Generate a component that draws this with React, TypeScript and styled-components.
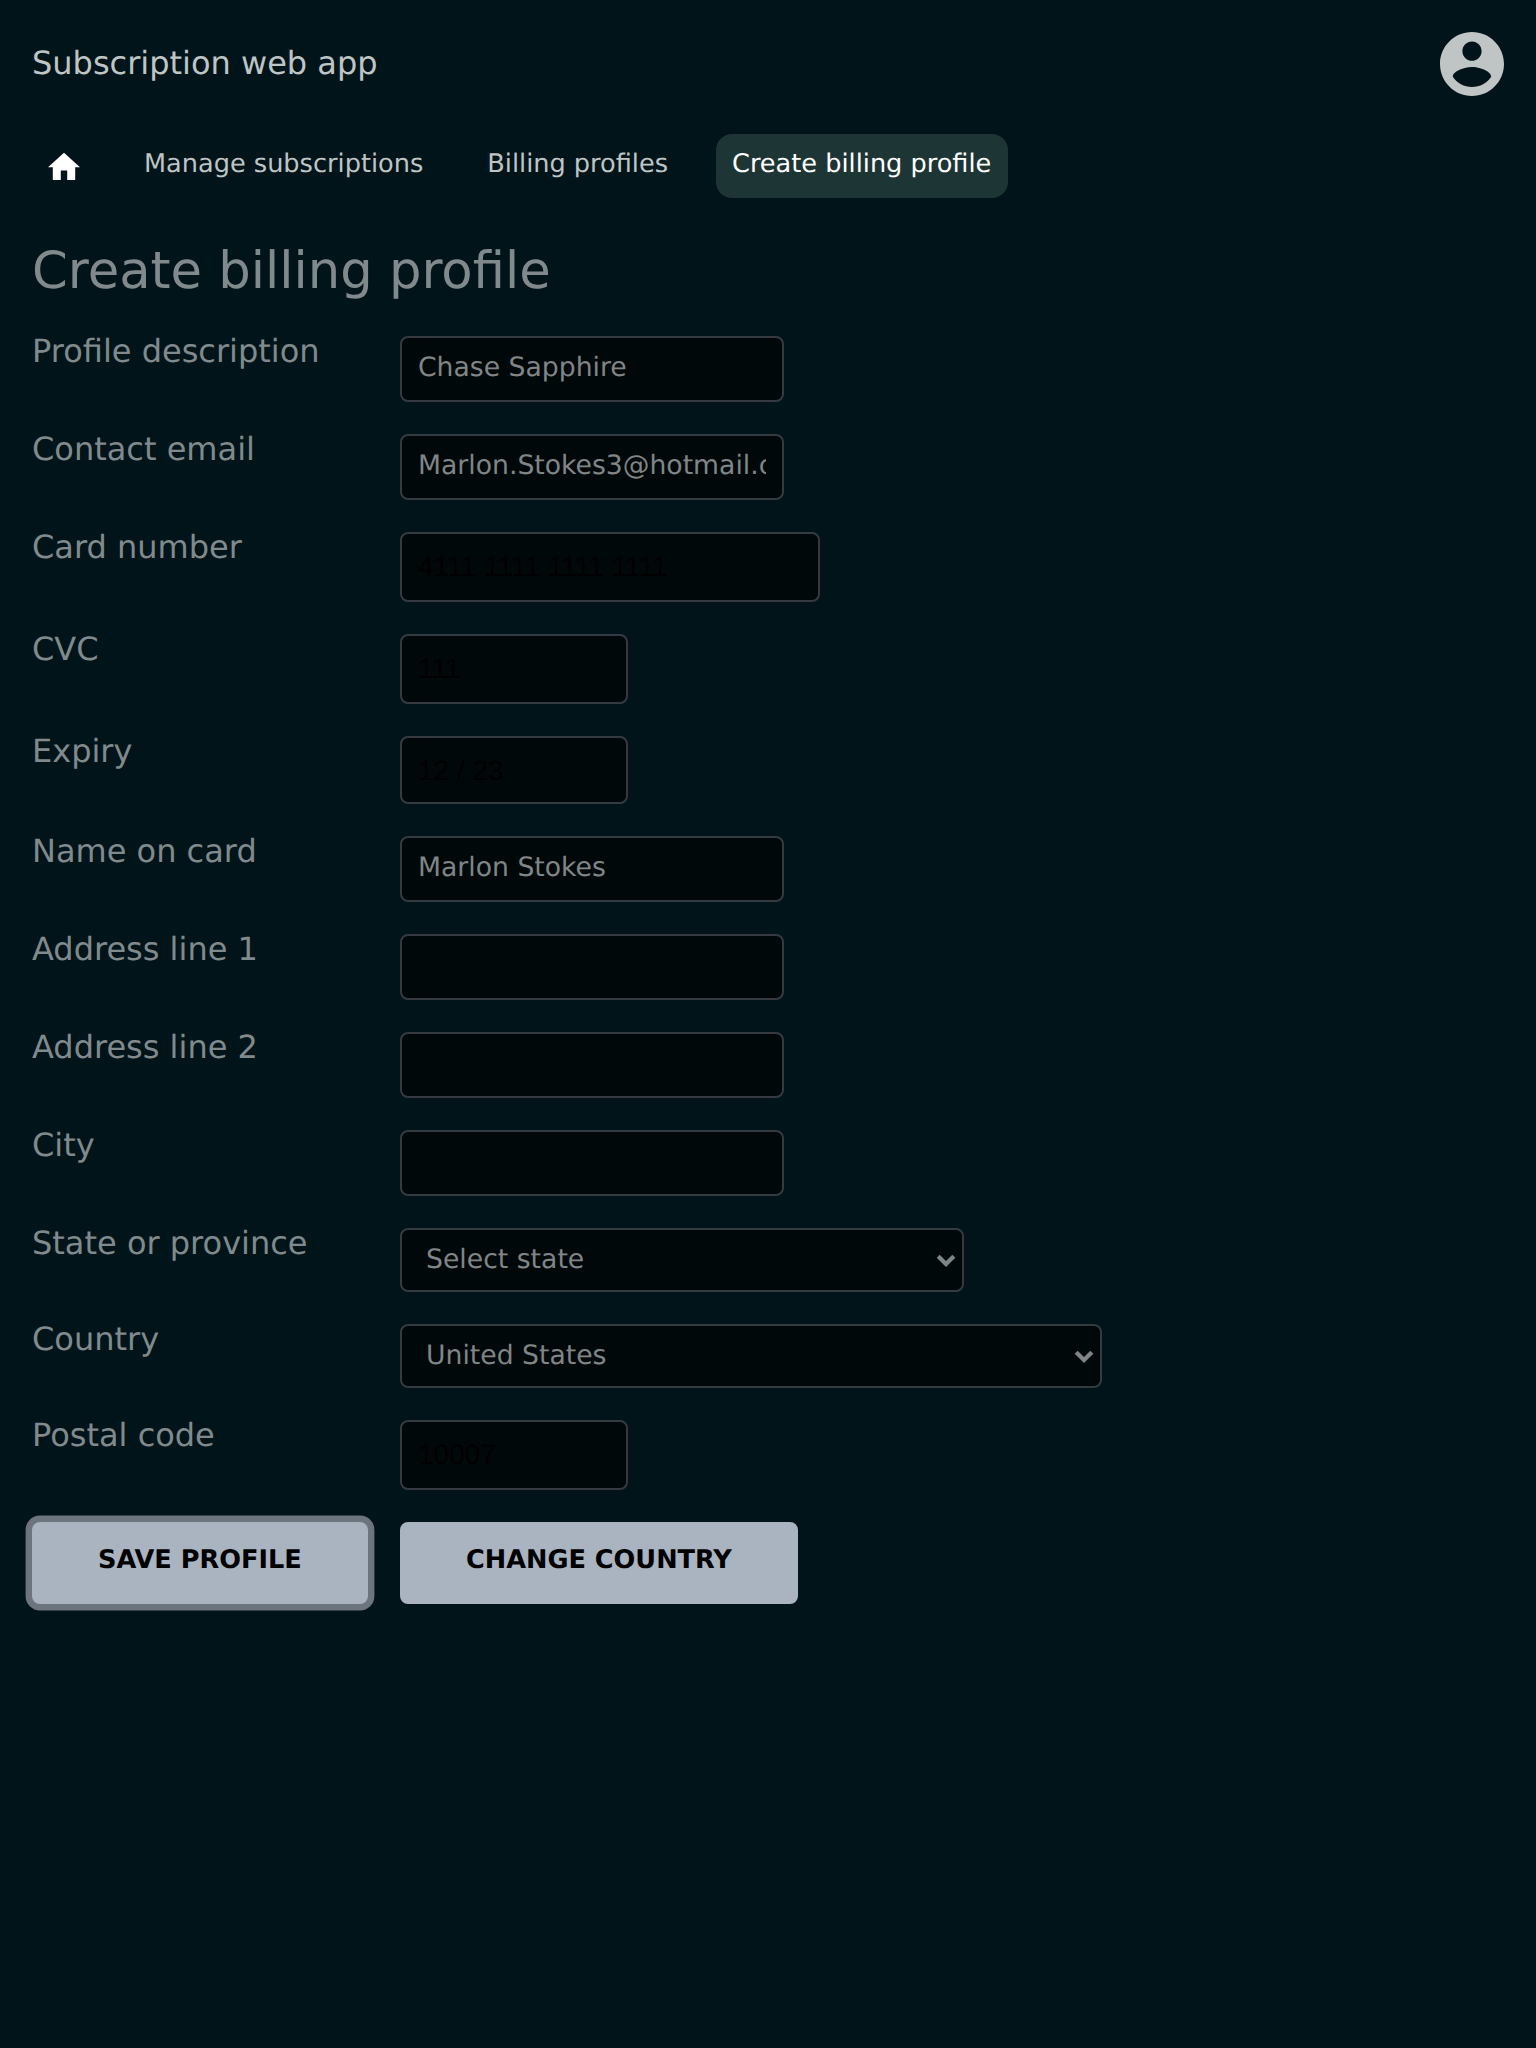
import React from "react";
import styled, { createGlobalStyle } from "styled-components";

const GlobalStyle = createGlobalStyle`
  *, *::before, *::after { box-sizing: border-box; }
  body {
    margin: 0;
    background: #001419;
    color: #808a8c;
    font-family: "DejaVu Sans", sans-serif;
    font-size: 32px;
    text-rendering: geometricPrecision;
  }
  input, button { text-rendering: inherit; }
`;

const Page = styled.div`
  min-height: 2048px;
  padding: 32px;
`;

const Header = styled.header`
  display: flex;
  justify-content: space-between;
  align-items: center;
  height: 64px;
`;

const Brand = styled.span`
  color: #bfc4c5;
  line-height: 38px;
  padding-bottom: 2px;
`;

const Avatar = styled.svg`
  display: block;
  width: 64px;
  height: 64px;
  fill: #bfc4c5;
`;

const Nav = styled.nav`
  display: flex;
  gap: 32px;
  margin-top: 38px;
`;

const NavLink = styled.a<{ $active?: boolean }>`
  height: 64px;
  padding: 15px ${(p) => (p.$active ? "17px" : "16px")} 0 16px;
  border-radius: 16px;
  font-size: 25.6px;
  line-height: 30px;
  white-space: nowrap;
  color: ${(p) => (p.$active ? "#ffffff" : "#bfc4c5")};
  background: ${(p) => (p.$active ? "#1e3535" : "transparent")};
`;

const HomeIcon = styled.svg`
  display: block;
  width: 32px;
  height: 28px;
  margin-top: 3px;
  fill: #ffffff;
`;

const Title = styled.h1`
  margin: 43px 0 0;
  font-size: 51.2px;
  font-weight: 400;
  line-height: 60px;
`;

const Form = styled.form`
  display: grid;
  grid-template-columns: 336px max-content;
  column-gap: 32px;
  row-gap: 32px;
  justify-items: start;
  align-items: start;
  margin-top: 35px;
`;

const Label = styled.label`
  line-height: 30px;
  white-space: nowrap;
`;

const Input = styled.input`
  display: block;
  width: 384px;
  height: 66px;
  padding: 0 16px 3px;
  border: 2px solid #343a40;
  border-radius: 8px;
  outline: none;
  background: #00080a;
  color: #808586;
  font-family: "DejaVu Sans", sans-serif;
  font-size: 26.667px;
`;

const SecureInput = styled(Input)<{ $width: number; $height: number }>`
  width: ${(p) => p.$width}px;
  height: ${(p) => p.$height}px;
  padding: ${(p) => (p.$height < 70 ? "2px 16px 0" : "0 16px")};
  color: #000000;
  font-family: "Liberation Sans", Arial, sans-serif;
  font-size: 28px;
`;

const SelectBox = styled.div<{ $width: number }>`
  display: flex;
  justify-content: space-between;
  align-items: flex-start;
  width: ${(p) => p.$width}px;
  height: 64px;
  padding: 14px 6px 0 24px;
  border: 2px solid #343a40;
  border-radius: 8px;
  background: #00080a;
  color: #808586;
  font-size: 26.667px;
  line-height: 31px;
`;

const Chevron = styled.svg`
  width: 20px;
  height: 14px;
  margin-top: 10px;
  fill: none;
  stroke: #808586;
  stroke-width: 4.2;
`;

const Button = styled.button<{ $focused?: boolean }>`
  height: 82px;
  padding: 0 64px 6px;
  border: 2px solid #a9b4c0;
  border-radius: 8px;
  background: #a9b4c0;
  color: #000000;
  box-shadow: ${(p) => (p.$focused ? "0 0 0 6.4px #6c757d" : "none")};
  font-family: "DejaVu Sans", sans-serif;
  font-size: 25.6px;
  font-weight: 700;
  white-space: nowrap;
`;

type Field =
  | { kind: "text"; label: string; value: string }
  | { kind: "secure"; label: string; value: string; width: number; height: number }
  | { kind: "select"; label: string; value: string; width: number };

const fields: Field[] = [
  { kind: "text", label: "Profile description", value: "Chase Sapphire" },
  { kind: "text", label: "Contact email", value: "Marlon.Stokes3@hotmail.com" },
  { kind: "secure", label: "Card number", value: "4111 1111 1111 1111", width: 420, height: 70 },
  { kind: "secure", label: "CVC", value: "111", width: 228, height: 70 },
  { kind: "secure", label: "Expiry", value: "12 / 23", width: 228, height: 68 },
  { kind: "text", label: "Name on card", value: "Marlon Stokes" },
  { kind: "text", label: "Address line 1", value: "" },
  { kind: "text", label: "Address line 2", value: "" },
  { kind: "text", label: "City", value: "" },
  { kind: "select", label: "State or province", value: "Select state", width: 564 },
  { kind: "select", label: "Country", value: "United States", width: 702 },
  { kind: "secure", label: "Postal code", value: "10007", width: 228, height: 70 },
];

function Control({ field }: { field: Field }) {
  if (field.kind === "select") {
    return (
      <SelectBox $width={field.width} role="combobox">
        {field.value}
        <Chevron viewBox="0 0 20 14">
          <path d="M2.2 2.2 L10 10 L17.8 2.2" />
        </Chevron>
      </SelectBox>
    );
  }
  if (field.kind === "secure") {
    return <SecureInput $width={field.width} $height={field.height} defaultValue={field.value} />;
  }
  return <Input defaultValue={field.value} />;
}

export default function App() {
  return (
    <>
      <GlobalStyle />
      <Page>
        <Header>
          <Brand>Subscription web app</Brand>
          <Avatar viewBox="2 2 20 20">
            <path d="M12 2C6.48 2 2 6.48 2 12s4.48 10 10 10 10-4.48 10-10S17.52 2 12 2zm0 3c1.66 0 3 1.34 3 3s-1.34 3-3 3-3-1.34-3-3 1.34-3 3-3zm0 14.2c-2.5 0-4.71-1.28-6-3.22.03-1.99 4-3.08 6-3.08 1.99 0 5.97 1.09 6 3.08-1.29 1.94-3.5 3.22-6 3.22z" />
          </Avatar>
        </Header>
        <Nav>
          <NavLink>
            <HomeIcon viewBox="2 2.5 20 17.5">
              <path d="M10 20v-6h4v6h5v-8h3L12 3 2 12h3v8z" />
            </HomeIcon>
          </NavLink>
          <NavLink>Manage subscriptions</NavLink>
          <NavLink>Billing profiles</NavLink>
          <NavLink $active>Create billing profile</NavLink>
        </Nav>
        <Title>Create billing profile</Title>
        <Form onSubmit={(e) => e.preventDefault()}>
          {fields.map((field) => (
            <React.Fragment key={field.label}>
              <Label>{field.label}</Label>
              <Control field={field} />
            </React.Fragment>
          ))}
          <Button type="submit" $focused>
            SAVE PROFILE
          </Button>
          <Button type="button">CHANGE COUNTRY</Button>
        </Form>
      </Page>
    </>
  );
}
